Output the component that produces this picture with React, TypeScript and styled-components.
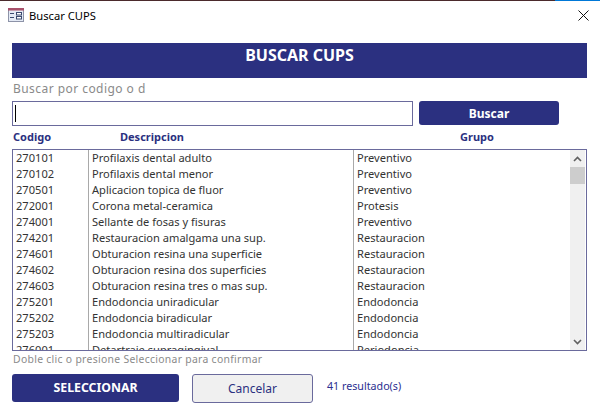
import React from "react";
import styled, { createGlobalStyle } from "styled-components";

const Global = createGlobalStyle`
  html, body { margin: 0; padding: 0; background: #fff; }
  body { font-family: "Noto Sans", "Open Sans", "Liberation Sans", sans-serif; }
`;

const Win = styled.div`
  width: 600px; height: 420px; box-sizing: border-box; background: #fff; overflow: hidden;
  display: flex; flex-direction: column;
`;
const TopEdge = styled.div`
  height: 1px; flex: none; background: linear-gradient(to right, #4b2a2c 0, #4b2a2c 555px, #0078d7 555px);
`;
const TitleBar = styled.div`
  height: 29px; flex: none; display: flex; align-items: center; padding: 0 11px 0 8px; gap: 5px;
`;
const TitleText = styled.span`
  font-size: 11.2px; color: #000; flex: 1;
`;
const Body = styled.div`
  padding: 13px 13px 0 12px; display: flex; flex-direction: column;
`;
const Banner = styled.div`
  height: 35px; background: #2b3080; color: #fff; font-weight: 700; font-size: 16px;
  display: flex; justify-content: center; padding-top: 2px; box-sizing: border-box; line-height: 20px;
`;
const SearchLabel = styled.div`
  height: 23px; line-height: 21px; font-size: 12px; color: #8a8a8a; letter-spacing: 0.45px; padding-left: 1px;
`;
const SearchRow = styled.div`
  display: flex; gap: 6px; align-items: flex-start; width: 547px;
`;
const Input = styled.div`
  width: 401px; height: 25px; box-sizing: border-box; border: 1px solid #6a6a9c; padding: 1px 1px; display: flex; align-items: center;
`;
const Caret = styled.div`
  width: 1px; height: 17px; background: #000; margin-left: 1px;
`;
const NavyButton = styled.div<{ $w: number; $h: number; $size: number; $tight?: number }>`
  width: ${p => p.$w}px; height: ${p => p.$h}px; background: #2b3080; color: #fff; border-radius: 3px;
  font-weight: 700; font-size: ${p => p.$size}px; display: flex; align-items: center; justify-content: center;
  padding-bottom: ${p => p.$tight ?? 0}px; box-sizing: border-box;
`;
const HeaderRow = styled.div`
  display: grid; grid-template-columns: 76px 265px 1fr; height: 23px; align-items: center;
  font-size: 11px; font-weight: 700; color: #2b3080; padding: 0 0 2px 1px; box-sizing: border-box;
`;
const HeadDesc = styled.span` padding-left: 31px; `;
const HeadGroup = styled.span` padding-left: 106px; `;
const List = styled.div`
  height: 202px; box-sizing: border-box; border: 1px solid #6a6a9c; display: flex; overflow: hidden;
`;
const Rows = styled.div`
  flex: 1; display: flex; flex-direction: column;
`;
const Row = styled.div`
  display: grid; grid-template-columns: 75px 265px 1fr; height: 16px; flex: none;
  font-size: 11.1px; line-height: 16px; color: #333;
`;
const Cell = styled.span`
  padding-left: 3px; white-space: nowrap; overflow: hidden;
`;
const Divider = styled.span`
  border-left: 1px solid #a9a9a9; padding-left: 3px; white-space: nowrap; overflow: hidden;
`;
const Scrollbar = styled.div`
  width: 15px; margin-right: 1px; background: #f0f0f0; display: flex; flex-direction: column; flex: none;
`;
const ScrollBtn = styled.div`
  height: 17px; display: flex; align-items: center; justify-content: center; flex: none;
`;
const Thumb = styled.div`
  height: 17px; background: #cdcdcd; flex: none;
`;
const Spacer = styled.div` flex: 1; `;
const Hint = styled.div`
  height: 23px; line-height: 16px; font-size: 10.4px; color: #8a8a8a; letter-spacing: 0.3px; padding-left: 1px;
`;
const Footer = styled.div`
  display: flex; align-items: flex-start;
`;
const CancelButton = styled.div`
  width: 121px; height: 29px; box-sizing: border-box; margin-left: 13px; border: 1px solid #6a6a9c; border-radius: 3px;
  background: #f0f0f0; color: #2b3080; font-size: 12px; display: flex; align-items: center; justify-content: center;
`;
const Count = styled.div`
  margin-left: 14px; font-size: 10.7px; color: #2b2f90; line-height: 24px;
`;

const data: [string, string, string][] = [
  ["270101", "Profilaxis dental adulto", "Preventivo"],
  ["270102", "Profilaxis dental menor", "Preventivo"],
  ["270501", "Aplicacion topica de fluor", "Preventivo"],
  ["272001", "Corona metal-ceramica", "Protesis"],
  ["274001", "Sellante de fosas y fisuras", "Preventivo"],
  ["274201", "Restauracion amalgama una sup.", "Restauracion"],
  ["274601", "Obturacion resina una superficie", "Restauracion"],
  ["274602", "Obturacion resina dos superficies", "Restauracion"],
  ["274603", "Obturacion resina tres o mas sup.", "Restauracion"],
  ["275201", "Endodoncia uniradicular", "Endodoncia"],
  ["275202", "Endodoncia biradicular", "Endodoncia"],
  ["275203", "Endodoncia multiradicular", "Endodoncia"],
  ["276001", "Detartraje supragingival", "Periodoncia"],
];

const FormIcon = () => (
  <svg width="16" height="15" viewBox="0 0 16 15" style={{ flex: "none" }}>
    <rect x="0.5" y="0.5" width="15" height="13" fill="#e4eaf5" stroke="#8d93a8" />
    <rect x="0" y="0" width="16" height="2.5" fill="#a8506a" />
    <path d="M2 5.5h4M2 9.5h4" stroke="#3a4a70" />
    <rect x="8.5" y="4.5" width="5" height="2.5" fill="#fff" stroke="#3a4a70" />
    <rect x="8.5" y="8.5" width="5" height="2.5" fill="#fff" stroke="#3a4a70" />
  </svg>
);
const CloseIcon = () => (
  <svg width="11" height="11" viewBox="0 0 11 11" style={{ flex: "none" }}>
    <path d="M0.5 0.5L10.5 10.5M10.5 0.5L0.5 10.5" stroke="#111" strokeWidth="1" />
  </svg>
);
const Chevron = ({ up }: { up?: boolean }) => (
  <svg width="9" height="6" viewBox="0 0 9 6">
    <path d={up ? "M1 5L4.5 1.5L8 5" : "M1 1L4.5 4.5L8 1"} fill="none" stroke="#606060" strokeWidth="1.6" />
  </svg>
);

export default function App() {
  return (
    <Win>
      <Global />
      <TopEdge />
      <TitleBar>
        <FormIcon />
        <TitleText>Buscar CUPS</TitleText>
        <CloseIcon />
      </TitleBar>
      <Body>
        <Banner>BUSCAR CUPS</Banner>
        <SearchLabel>Buscar por codigo o d</SearchLabel>
        <SearchRow>
          <Input><Caret /></Input>
          <NavyButton $w={140} $h={24} $size={12}>Buscar</NavyButton>
        </SearchRow>
        <HeaderRow>
          <span>Codigo</span>
          <HeadDesc>Descripcion</HeadDesc>
          <HeadGroup>Grupo</HeadGroup>
        </HeaderRow>
        <List>
          <Rows>
            {data.map(r => (
              <Row key={r[0]}>
                <Cell>{r[0]}</Cell>
                <Divider>{r[1]}</Divider>
                <Divider>{r[2]}</Divider>
              </Row>
            ))}
          </Rows>
          <Scrollbar>
            <ScrollBtn><Chevron up /></ScrollBtn>
            <Thumb />
            <Spacer />
            <ScrollBtn><Chevron /></ScrollBtn>
          </Scrollbar>
        </List>
        <Hint>Doble clic o presione Seleccionar para confirmar</Hint>
        <Footer>
          <NavyButton $w={167} $h={28} $size={12.3} $tight={2}>SELECCIONAR</NavyButton>
          <CancelButton>Cancelar</CancelButton>
          <Count>41 resultado(s)</Count>
        </Footer>
      </Body>
    </Win>
  );
}
